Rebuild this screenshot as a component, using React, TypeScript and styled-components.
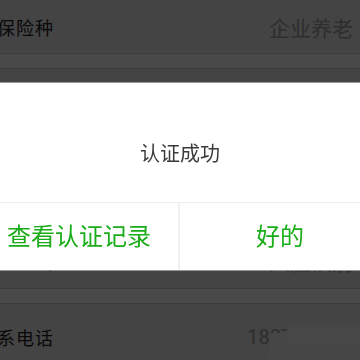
import React from "react";
import styled, { createGlobalStyle } from "styled-components";

const Global = createGlobalStyle`
  html, body { margin: 0; padding: 0; background: #e3e3e3; overflow: hidden; }
  body { font-family: "Noto Sans CJK SC", "Noto Sans", sans-serif; }
`;

const Page = styled.div`
  width: 402px;
  margin-left: -22px;
  display: flex;
  flex-direction: column;
  background: #f5f5f5;
`;

const Section = styled.div<{ $top?: boolean }>`
  display: flex;
  flex-direction: column;
  background: #e3e3e3;
  border-top: ${(p) => (p.$top ? "1px solid #c8c8c8" : "none")};
`;

const Row = styled.div<{ $h: number }>`
  height: ${(p) => p.$h}px;
  display: flex;
  align-items: center;
  justify-content: space-between;
  padding: 0 27px 0 0;
  border-bottom: 1px solid #c8c8c8;
  box-sizing: content-box;
`;

const Label = styled.span`
  font-size: 18px;
  letter-spacing: 1px;
  color: #1e1e1e;
  line-height: 24px;
`;

const Value = styled.span<{ $size: number; $shift?: number }>`
  position: relative;
  font-size: ${(p) => p.$size}px;
  color: #999999;
  line-height: 28px;
  margin-right: ${(p) => -(p.$shift || 0)}px;
  font-family: ${(p) => (p.$shift ? "Roboto, 'Noto Sans CJK SC', sans-serif" : "inherit")};
`;

const Blur = styled.span<{ $left: number; $top: number; $tone: string }>`
  position: absolute;
  left: ${(p) => p.$left}px;
  top: ${(p) => p.$top}px;
  width: 110px;
  height: 26px;
  background: ${(p) => p.$tone};
`;

const Spacer = styled.div`
  height: 14px;
  background: #f5f5f5;
`;

const Mask = styled.div`
  position: fixed;
  inset: 0;
  background: rgba(0, 0, 0, 0.7);
`;

const Dialog = styled.div`
  position: fixed;
  left: -20px;
  top: 83px;
  width: 400px;
  height: 187px;
  background: #fff;
  display: flex;
  flex-direction: column;
  box-shadow: 0 0 0 1px rgba(255, 255, 255, 0.45);
`;

const Body = styled.div`
  height: 120px;
  box-sizing: border-box;
  padding-top: 56px;
  text-align: center;
  font-size: 20px;
  line-height: 28px;
  color: #3a3a3a;
  border-bottom: 1px solid #ececec;
`;

const Actions = styled.div`
  flex: 1;
  display: grid;
  grid-template-columns: 1fr 1fr;
`;

const Action = styled.button<{ $divider?: boolean }>`
  border: none;
  background: none;
  padding: 0 0 3px;
  margin: 0;
  font-family: inherit;
  font-size: 24px;
  line-height: 32px;
  color: #1aad19;
  border-right: ${(p) => (p.$divider ? "2px solid #f0f0f0" : "none")};
`;

export default function App() {
  return (
    <>
      <Global />
      <Page>
        <Section>
          <Row $h={53}>
            <Label>参保险种</Label>
            <Value $size={21}>企业养老</Value>
          </Row>
        </Section>
        <Spacer />
        <Section $top>
          <Row $h={54}>
            <Label>参保地区</Label>
            <Value $size={21}>武汉市</Value>
          </Row>
          <Row $h={54}>
            <Label>姓名</Label>
            <Value $size={21}>张三</Value>
          </Row>
          <Row $h={54}>
            <Label>身份证号</Label>
            <Value $size={21}>420************</Value>
          </Row>
          <Row $h={54}>
            <Label>认证方式</Label>
            <Value $size={21}>人脸识别</Value>
          </Row>
        </Section>
        <Spacer />
        <Section $top>
          <Row $h={66}>
            <Label>联系电话</Label>
            <Value $size={20} $shift={18}>
              18071234567
              <Blur $left={23} $top={10} $tone="#ececec" />
              <Blur $left={40} $top={2} $tone="#efefef" />
            </Value>
          </Row>
        </Section>
      </Page>
      <Mask />
      <Dialog>
        <Body>认证成功</Body>
        <Actions>
          <Action $divider>查看认证记录</Action>
          <Action>好的</Action>
        </Actions>
      </Dialog>
    </>
  );
}
